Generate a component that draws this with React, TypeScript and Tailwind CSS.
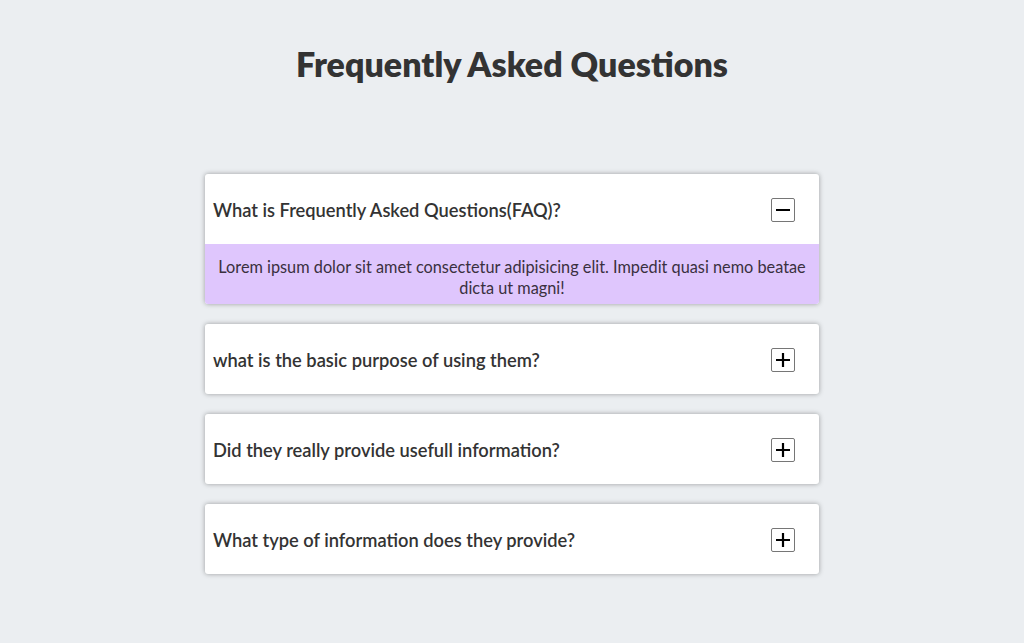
import { useState } from "react";

const faqs = [
  {
    q: "What is Frequently Asked Questions(FAQ)?",
    a: "Lorem ipsum dolor sit amet consectetur adipisicing elit. Impedit quasi nemo beatae dicta ut magni!",
  },
  {
    q: "what is the basic purpose of using them?",
    a: "Lorem ipsum dolor sit amet consectetur adipisicing elit. Impedit quasi nemo beatae dicta ut magni!",
  },
  {
    q: "Did they really provide usefull information?",
    a: "Lorem ipsum dolor sit amet consectetur adipisicing elit. Impedit quasi nemo beatae dicta ut magni!",
  },
  {
    q: "What type of information does they provide?",
    a: "Lorem ipsum dolor sit amet consectetur adipisicing elit. Impedit quasi nemo beatae dicta ut magni!",
  },
];

function FaqItem({ q, a, open, onToggle }: { q: string; a: string; open: boolean; onToggle: () => void }) {
  return (
    <div className="overflow-hidden rounded-[3px] bg-white shadow-[0_0_5px_rgba(0,0,0,0.35)]">
      <div className="flex h-[70px] items-center justify-between pl-2 pr-6">
        <h3 className="mt-[4px] text-[18.3px] font-semibold text-[#333]">{q}</h3>
        <button
          onClick={onToggle}
          className="mt-[1px] flex h-6 w-6 items-center justify-center rounded-[2px] border border-[#767676] bg-white"
        >
          <svg width="16" height="16" viewBox="0 0 16 16">
            <path d="M1 8h14" stroke="#000" strokeWidth="2.2" />
            {!open ? <path d="M8 1v14" stroke="#000" strokeWidth="2.2" /> : null}
          </svg>
        </button>
      </div>
      {open ? (
        <p className="bg-[#dfc6fd] px-3 pt-[12px] pb-[6px] text-center text-[16.3px] leading-[21px] text-[#3a3040]">
          {a}
        </p>
      ) : null}
    </div>
  );
}

export default function App() {
  const [openIdx, setOpenIdx] = useState<number | null>(0);

  return (
    <div className="min-h-[643px] bg-[#ebeef1] pt-[42px] font-['Lato',sans-serif]">
      <h1 className="text-center font-['Comic_Sans_MS','Lato',sans-serif] text-[34px] leading-[44px] font-extrabold text-[#333]">
        Frequently Asked Questions
      </h1>
      <div className="mx-auto mt-[88px] flex w-[614px] flex-col gap-5">
        {faqs.map((f, i) => (
          <FaqItem
            key={i}
            q={f.q}
            a={f.a}
            open={openIdx === i}
            onToggle={() => setOpenIdx(openIdx === i ? null : i)}
          />
        ))}
      </div>
    </div>
  );
}
